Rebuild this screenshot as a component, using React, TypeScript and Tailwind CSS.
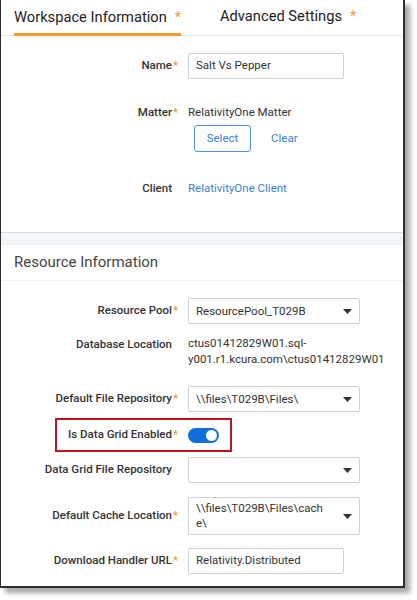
const font = { fontFamily: 'Roboto, "Liberation Sans", sans-serif' };

function Label({ text, req }: { text: string; req?: boolean }) {
  return (
    <div className="w-[178px] shrink-0 flex justify-end items-center text-[11.5px] font-medium text-[#333] whitespace-nowrap">
      <span>{text}</span>
      <span className="w-[7px] pl-[1px] text-[#f29a2e]">{req ? '*' : ''}</span>
    </div>
  );
}

function Caret() {
  return (
    <svg width="9" height="5" viewBox="0 0 9 5" className="shrink-0">
      <path d="M0 0h9L4.5 5z" fill="#333" />
    </svg>
  );
}

function SelectBox({ lines, tall }: { lines: string[]; tall?: boolean }) {
  return (
    <div
      className={`ml-[9px] w-[172px] flex items-center justify-between border border-[#c8d2dd] rounded-[2px] pl-[7px] pr-[7px] text-[11.5px] text-[#333] ${tall ? 'h-[38px]' : 'h-[26px]'}`}
    >
      <span className="leading-[15px] whitespace-nowrap">
        {lines.map((l, i) => (
          <span key={i} className="block">
            {l}
          </span>
        ))}
      </span>
      <Caret />
    </div>
  );
}

function TextBox({ value }: { value: string }) {
  return (
    <div className="ml-[9px] w-[156px] h-[26px] flex items-center border border-[#c8d2dd] rounded-[2px] px-[7px] text-[11.5px] text-[#333]">
      {value}
    </div>
  );
}

export default function App() {
  return (
    <div className="w-[417px] h-[600px] bg-white" style={font}>
      <div className="w-[405px] h-[588px] bg-white border-l border-r-2 border-b-2 border-[#2e2e2e] shadow-[5px_5px_5px_rgba(0,0,0,0.35)] overflow-hidden flex flex-col">
        {/* tabs */}
        <div className="h-[36px] shrink-0 border-b border-[#e4e9ef] flex items-end pl-[13px]">
          <div className="h-[36px] w-[167px] border-b-[3px] border-[#f29a2e] flex items-center -mb-px pt-[1px] whitespace-nowrap">
            <span className="text-[14.7px] text-[#222]">Workspace Information</span>
            <span className="text-[14.7px] text-[#f29a2e] ml-[8px]">*</span>
          </div>
          <div className="h-[36px] flex items-center ml-[39px] pb-[2px] whitespace-nowrap">
            <span className="text-[14.7px] text-[#222]">Advanced Settings</span>
            <span className="text-[14.7px] text-[#f29a2e] ml-[8px]">*</span>
          </div>
        </div>

        {/* section 1 */}
        <div className="flex flex-col h-[196px] shrink-0">
          <div className="flex items-center mt-[17px]">
            <Label text="Name" req />
            <TextBox value="Salt Vs Pepper" />
          </div>
          <div className="flex items-center mt-[25px]">
            <Label text="Matter" req />
            <span className="ml-[9px] text-[11.5px] text-[#333]">RelativityOne Matter</span>
          </div>
          <div className="flex items-center mt-[4px] pl-[193px]">
            <button className="w-[57px] h-[27px] border border-[#4a8fe0] rounded-[3px] text-[11.5px] text-[#3a82d8] bg-white">
              Select
            </button>
            <span className="ml-[20px] text-[11.5px] text-[#3a82d8]">Clear</span>
          </div>
          <div className="flex items-center mt-[28px]">
            <Label text="Client" />
            <span className="ml-[9px] text-[11.5px] text-[#3a82d8]">RelativityOne Client</span>
          </div>
        </div>

        {/* separator */}
        <div className="h-[13px] shrink-0 bg-[#f3f6f9] border-t border-[#d9dee4] border-b border-b-[#eef1f4]" />

        {/* section 2 header */}
        <div className="h-[36px] shrink-0 flex items-center pl-[13px] border-b border-[#eef1f5]">
          <span className="text-[15px] text-[#444]">Resource Information</span>
        </div>

        {/* section 2 */}
        <div className="flex flex-col">
          <div className="flex items-center mt-[17px]">
            <Label text="Resource Pool" req />
            <SelectBox lines={['ResourcePool_T029B']} />
          </div>
          <div className="flex items-start mt-[11px]">
            <div className="pt-[1px]">
              <Label text="Database Location" />
            </div>
            <div className="ml-[9px] text-[11.5px] text-[#333] leading-[16px]">
              ctus01412829W01.sql-
              <br />
              y001.r1.kcura.com\ctus01412829W01
            </div>
          </div>
          <div className="flex items-center mt-[19px]">
            <Label text="Default File Repository" req />
            <SelectBox lines={['\\\\files\\T029B\\Files\\']} />
          </div>
          <div className="flex mt-[6px] ml-[54px]">
            <div className="w-[177px] h-[34px] border-2 border-[#c0161e] flex items-center">
              <div className="w-[122px] flex justify-end text-[11.5px] font-medium text-[#333] whitespace-nowrap">
                <span>Is Data Grid Enabled</span>
                <span className="w-[7px] pl-[1px] text-[#f29a2e]">*</span>
              </div>
              <div className="ml-[9px] w-[31px] h-[15px] rounded-full bg-[#0f6fde] flex items-center justify-end pr-[2px]">
                <div className="w-[11px] h-[11px] rounded-full bg-white" />
              </div>
            </div>
          </div>
          <div className="flex items-center mt-[5px]">
            <Label text="Data Grid File Repository" />
            <SelectBox lines={['']} />
          </div>
          <div className="flex items-center mt-[14px]">
            <Label text="Default Cache Location" req />
            <SelectBox lines={['\\\\files\\T029B\\Files\\cach', 'e\\']} tall />
          </div>
          <div className="flex items-center mt-[13px]">
            <Label text="Download Handler URL" req />
            <TextBox value="Relativity.Distributed" />
          </div>
        </div>
      </div>
    </div>
  );
}
